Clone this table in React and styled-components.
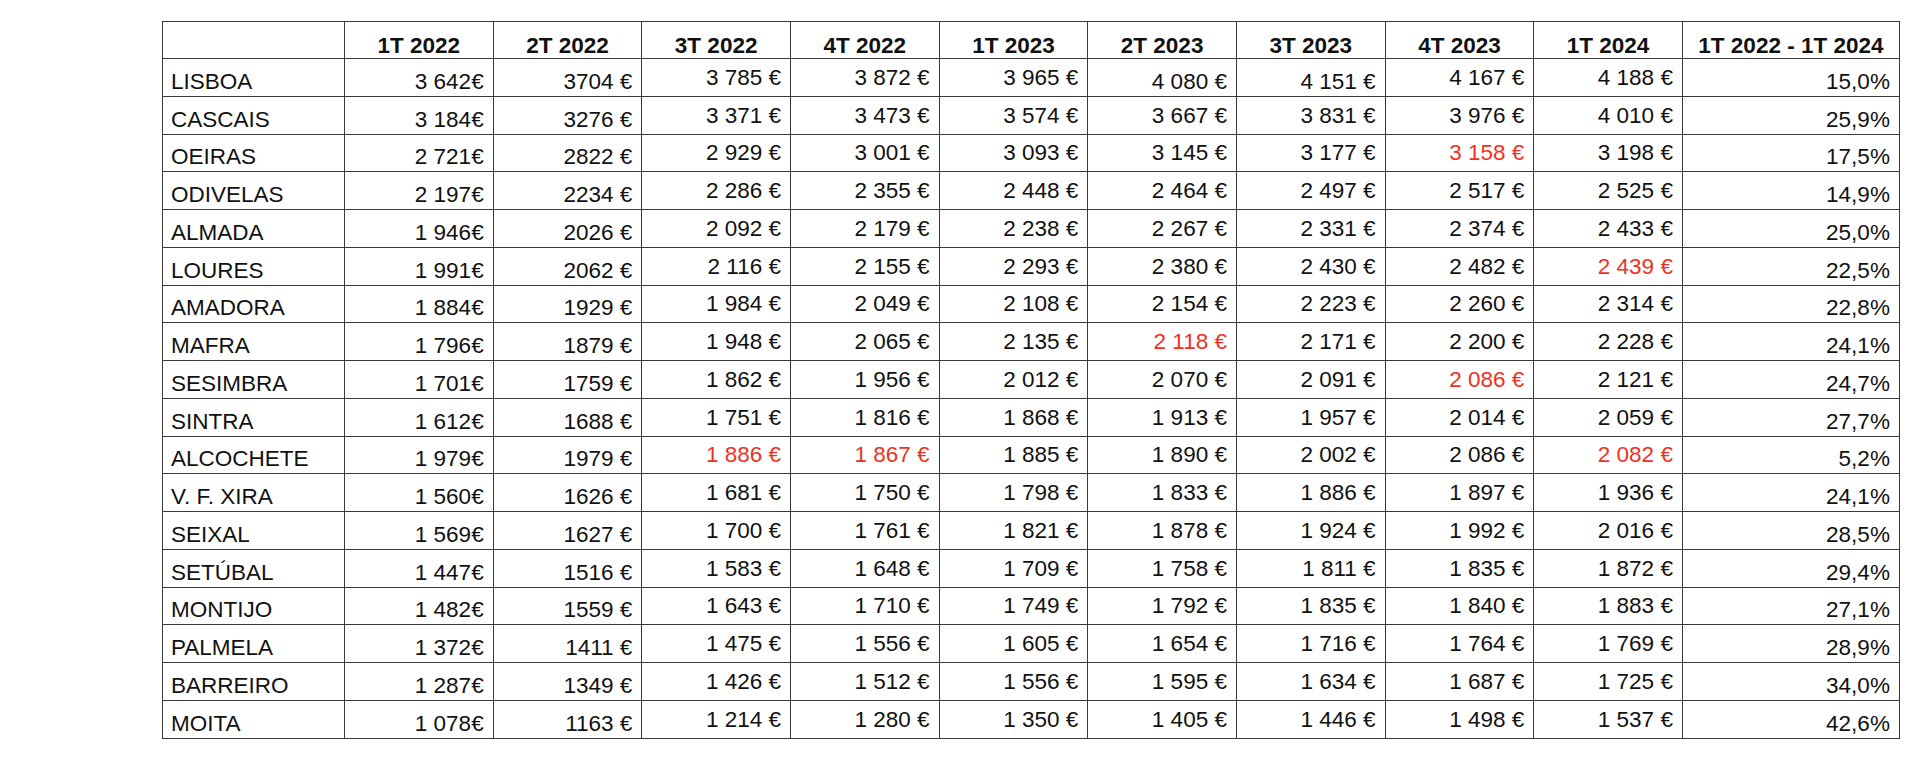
import React from 'react';
import styled, { createGlobalStyle } from 'styled-components';

const GlobalStyle = createGlobalStyle`
  body {
    margin: 0;
    background: #fff;
    font-family: "Liberation Sans", Arial, sans-serif;
  }
`

const Page = styled.div`
  padding: 21px 0 0 162px;
`

const Table = styled.table`
  border-collapse: collapse;
  table-layout: fixed;
  width: 1737px;
  font-size: 22.5px;
  line-height: 25px;
  color: #111;
`

const Row = styled.tr`
  height: ${props => props.head ? '37px' : '37.78px'};
`

const HeadCell = styled.th`
  border: 1px solid #3a3a3a;
  font-weight: bold;
  text-align: center;
  vertical-align: bottom;
  padding: 0 4px 0 4px;
  white-space: nowrap;
`

const NameCell = styled.td`
  border: 1px solid #3a3a3a;
  text-align: left;
  vertical-align: bottom;
  padding: 0 0 2px 8px;
  white-space: nowrap;
`

const ValueCell = styled.td`
  border: 1px solid #3a3a3a;
  text-align: right;
  vertical-align: bottom;
  padding: 0 9px ${props => props.low ? '2px' : '6px'} 0;
  white-space: nowrap;
  color: ${props => props.red ? '#ee3124' : '#111'};
`

const headers = ['1T 2022', '2T 2022', '3T 2022', '4T 2022', '1T 2023', '2T 2023', '3T 2023', '4T 2023', '1T 2024', '1T 2022 - 1T 2024'];
const widths = [182, 148.67, 148.67, 148.67, 148.67, 148.67, 148.67, 148.67, 148.67, 148.67, 217];

// columns printed lower in the cell (the rest sit near the middle)
const lowCols = [0, 1, 9];

// '*' marks a red value
const data = [
  ['LISBOA', '3 642€', '3704 €', '3 785 €', '3 872 €', '3 965 €', '4 080 €', '4 151 €', '4 167 €', '4 188 €', '15,0%'],
  ['CASCAIS', '3 184€', '3276 €', '3 371 €', '3 473 €', '3 574 €', '3 667 €', '3 831 €', '3 976 €', '4 010 €', '25,9%'],
  ['OEIRAS', '2 721€', '2822 €', '2 929 €', '3 001 €', '3 093 €', '3 145 €', '3 177 €', '*3 158 €', '3 198 €', '17,5%'],
  ['ODIVELAS', '2 197€', '2234 €', '2 286 €', '2 355 €', '2 448 €', '2 464 €', '2 497 €', '2 517 €', '2 525 €', '14,9%'],
  ['ALMADA', '1 946€', '2026 €', '2 092 €', '2 179 €', '2 238 €', '2 267 €', '2 331 €', '2 374 €', '2 433 €', '25,0%'],
  ['LOURES', '1 991€', '2062 €', '2 116 €', '2 155 €', '2 293 €', '2 380 €', '2 430 €', '2 482 €', '*2 439 €', '22,5%'],
  ['AMADORA', '1 884€', '1929 €', '1 984 €', '2 049 €', '2 108 €', '2 154 €', '2 223 €', '2 260 €', '2 314 €', '22,8%'],
  ['MAFRA', '1 796€', '1879 €', '1 948 €', '2 065 €', '2 135 €', '*2 118 €', '2 171 €', '2 200 €', '2 228 €', '24,1%'],
  ['SESIMBRA', '1 701€', '1759 €', '1 862 €', '1 956 €', '2 012 €', '2 070 €', '2 091 €', '*2 086 €', '2 121 €', '24,7%'],
  ['SINTRA', '1 612€', '1688 €', '1 751 €', '1 816 €', '1 868 €', '1 913 €', '1 957 €', '2 014 €', '2 059 €', '27,7%'],
  ['ALCOCHETE', '1 979€', '1979 €', '*1 886 €', '*1 867 €', '1 885 €', '1 890 €', '2 002 €', '2 086 €', '*2 082 €', '5,2%'],
  ['V. F. XIRA', '1 560€', '1626 €', '1 681 €', '1 750 €', '1 798 €', '1 833 €', '1 886 €', '1 897 €', '1 936 €', '24,1%'],
  ['SEIXAL', '1 569€', '1627 €', '1 700 €', '1 761 €', '1 821 €', '1 878 €', '1 924 €', '1 992 €', '2 016 €', '28,5%'],
  ['SETÚBAL', '1 447€', '1516 €', '1 583 €', '1 648 €', '1 709 €', '1 758 €', '1 811 €', '1 835 €', '1 872 €', '29,4%'],
  ['MONTIJO', '1 482€', '1559 €', '1 643 €', '1 710 €', '1 749 €', '1 792 €', '1 835 €', '1 840 €', '1 883 €', '27,1%'],
  ['PALMELA', '1 372€', '1411 €', '1 475 €', '1 556 €', '1 605 €', '1 654 €', '1 716 €', '1 764 €', '1 769 €', '28,9%'],
  ['BARREIRO', '1 287€', '1349 €', '1 426 €', '1 512 €', '1 556 €', '1 595 €', '1 634 €', '1 687 €', '1 725 €', '34,0%'],
  ['MOITA', '1 078€', '1163 €', '1 214 €', '1 280 €', '1 350 €', '1 405 €', '1 446 €', '1 498 €', '1 537 €', '42,6%'],
];

export default function App() {
  return (
    <Page>
      <GlobalStyle />
      <Table>
        <colgroup>
          {widths.map((w, i) => <col key={i} style={{ width: w }} />)}
        </colgroup>
        <thead>
          <Row head>
            <HeadCell />
            {headers.map(h => <HeadCell key={h}>{h}</HeadCell>)}
          </Row>
        </thead>
        <tbody>
          {data.map((row, r) => (
            <Row key={row[0]}>
              <NameCell>{row[0]}</NameCell>
              {row.slice(1).map((v, c) => {
                const red = v.startsWith('*');
                const low = lowCols.includes(c) || (r === 0 && (c === 5 || c === 6));
                return <ValueCell key={c} red={red} low={low}>{red ? v.slice(1) : v}</ValueCell>
              })}
            </Row>
          ))}
        </tbody>
      </Table>
    </Page>
  )
}
